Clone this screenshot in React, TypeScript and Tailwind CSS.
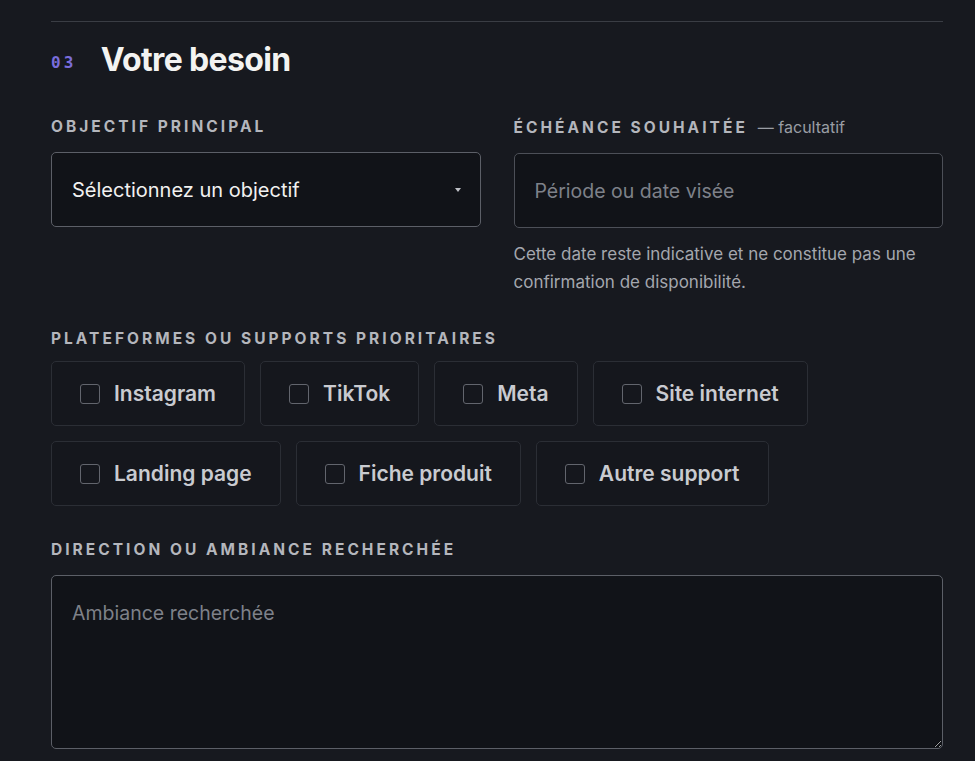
import { useState } from "react";

const ROW1 = ["Instagram", "TikTok", "Meta", "Site internet"];
const ROW2 = ["Landing page", "Fiche produit", "Autre support"];

function Label({ children, extra }: { children: React.ReactNode; extra?: string }) {
  return (
    <div className="flex items-baseline gap-[10px] leading-[22px]">
      <span className="text-[15.5px] font-bold uppercase tracking-[0.195em] text-[#b4b6bc]">{children}</span>
      {extra && <span className="text-[16px] text-[#9a9da4]">{extra}</span>}
    </div>
  );
}

function Choice({ label, checked, onToggle }: { label: string; checked: boolean; onToggle: () => void }) {
  return (
    <label className="flex h-[65px] cursor-pointer items-center gap-[14px] rounded-[5px] border border-[#2b2e35] bg-[#15171d] px-[28px]">
      <span
        onClick={onToggle}
        className={[
          "h-[20px] w-[20px] rounded-[3px] border",
          checked ? "border-[#7c6ee0] bg-[#7c6ee0]" : "border-[#62656d] bg-transparent",
        ].join(" ")}
      />
      <span className="text-[21px] font-semibold text-[#c9cbd0]">{label}</span>
    </label>
  );
}

export default function App() {
  const [picked, setPicked] = useState<string[]>([]);
  const toggle = (p: string) =>
    setPicked(prev => (prev.includes(p) ? prev.filter(x => x !== p) : [...prev, p]));

  return (
    <div className="min-h-[761px] bg-[#17191f] pl-[51px] pr-[32px] pt-[21px] font-['Inter',sans-serif] text-white">
      <div className="border-t border-[#3a3d44]" />

      <div className="mt-[15px] flex items-center gap-[24px] leading-[40px]">
        <span className="pt-[6px] font-['DejaVu_Sans_Mono',monospace] text-[16px] font-bold tracking-[0.2em] text-[#7a6ddb]">
          03
        </span>
        <h2 className="text-[32px] font-bold tracking-[-0.02em] text-[#f3f3f1]">Votre besoin</h2>
      </div>

      <div className="mt-[33px] grid grid-cols-2 gap-[33px]">
        <div className="flex flex-col gap-[14px]">
          <Label>Objectif principal</Label>
          <div className="flex h-[75px] items-center justify-between rounded-[5px] border border-[#5c5f67] bg-[#111318] pl-[20px] pr-[19px]">
            <span className="text-[20px] text-[#f1f1f0]">Sélectionnez un objectif</span>
            <svg width="6" height="4" viewBox="0 0 6 4">
              <path d="M0 0h6L3 4z" fill="#bfc1c6" />
            </svg>
          </div>
        </div>
        <div className="flex flex-col gap-[14px]">
          <Label extra="— facultatif">Échéance souhaitée</Label>
          <input
            placeholder="Période ou date visée"
            className="h-[75px] rounded-[5px] border border-[#4c4f57] bg-[#111318] px-[20px] text-[19.5px] text-white outline-none placeholder:text-[#7e8189]"
          />
          <p className="-mt-[2px] text-[17px] leading-[28px] text-[#a4a7ae]">
            Cette date reste indicative et ne constitue pas une confirmation de disponibilité.
          </p>
        </div>
      </div>

      <div className="mt-[32px]">
        <Label>Plateformes ou supports prioritaires</Label>
        <div className="mt-[11px] flex flex-col gap-[15px]">
          <div className="flex gap-[15px]">
            {ROW1.map(p => (
              <Choice key={p} label={p} checked={picked.includes(p)} onToggle={() => toggle(p)} />
            ))}
          </div>
          <div className="flex gap-[15px]">
            {ROW2.map(p => (
              <Choice key={p} label={p} checked={picked.includes(p)} onToggle={() => toggle(p)} />
            ))}
          </div>
        </div>
      </div>

      <div className="mt-[33px]">
        <Label>Direction ou ambiance recherchée</Label>
        <textarea
          placeholder="Ambiance recherchée"
          className="mt-[14px] block h-[174px] w-full rounded-[5px] border border-[#5c5f67] bg-[#111318] px-[20px] pt-[25px] text-[19.5px] leading-[25px] text-white outline-none placeholder:text-[#7e8189]"
        />
      </div>
    </div>
  );
}
